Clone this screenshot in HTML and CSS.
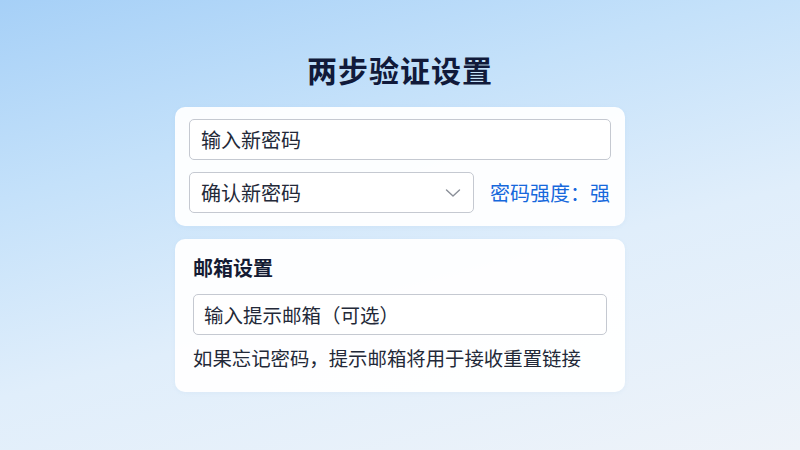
FILE: index.html
```html
<!DOCTYPE html>
<html lang="zh-CN">
<head>
  <meta charset="UTF-8">
  <title>两步验证设置</title>
  <link rel="stylesheet" href="styles.css">
</head>
<body>
<div class="page">
  <h1 class="title">两步验证设置</h1>

  <div class="card first">
    <div class="field">输入新密码</div>
    <div class="row">
      <div class="field select">
        <span>确认新密码</span>
        <svg class="chevron" width="16" height="10" viewBox="0 0 16 10">
          <path d="M1.5 2 L8 8 L14.5 2" fill="none" stroke="#8a8f98" stroke-width="1.4" stroke-linecap="round" stroke-linejoin="round"/>
        </svg>
      </div>
      <span class="strength">密码强度：强</span>
    </div>
  </div>

  <div class="card second">
    <h2 class="card-title">邮箱设置</h2>
    <div class="field small">输入提示邮箱（可选）</div>
    <p class="hint">如果忘记密码，提示邮箱将用于接收重置链接</p>
  </div>
</div>
</body>
</html>
```

FILE: styles.css
```css
html, body {
  margin: 0;
  height: 100%;
}
body {
  width: 800px;
  height: 450px;
  overflow: hidden;
  font-family: "Noto Sans CJK SC", "Noto Sans", sans-serif;
  color: #1f2636;
  background: linear-gradient(165deg, #a6d0f7 0%, #c4e1fa 30%, #e0eefb 60%, #eef3f9 100%);
}
.page {
  width: 450px;
  margin: 0 auto;
  padding-top: 48px;
  display: flex;
  flex-direction: column;
}
.title {
  margin: 0 0 17px;
  font-size: 30px;
  line-height: 42px;
  font-weight: 700;
  text-align: center;
  color: #111a3a;
  letter-spacing: 1px;
}
.card {
  background: rgba(255,255,255,0.94);
  border-radius: 10px;
  box-shadow: 0 1px 4px rgba(120,160,210,0.08);
}
.card.first {
  padding: 12px 14px 13px;
  display: flex;
  flex-direction: column;
  gap: 12px;
}
.card.second {
  margin-top: 13px;
  padding: 14px 18px 20px;
}
.field {
  height: 41px;
  box-sizing: border-box;
  border: 1px solid #c5c9d1;
  border-radius: 5px;
  background: #fff;
  padding: 0 11px;
  display: flex;
  align-items: center;
  font-size: 20px;
  color: #232938;
}
.row {
  display: flex;
  align-items: center;
  gap: 16px;
}
.select {
  width: 285px;
  justify-content: space-between;
  padding-right: 12px;
}
.chevron {
  display: block;
}
.strength {
  font-size: 20px;
  color: #1668dc;
  white-space: nowrap;
}
.card-title {
  margin: 0 0 11px;
  font-size: 20px;
  line-height: 30px;
  font-weight: 700;
  color: #141b33;
}
.field.small {
  font-size: 19.5px;
  padding-left: 10px;
}
.hint {
  margin: 9px 0 0;
  font-size: 19.4px;
  line-height: 28px;
  color: #232938;
}
```
